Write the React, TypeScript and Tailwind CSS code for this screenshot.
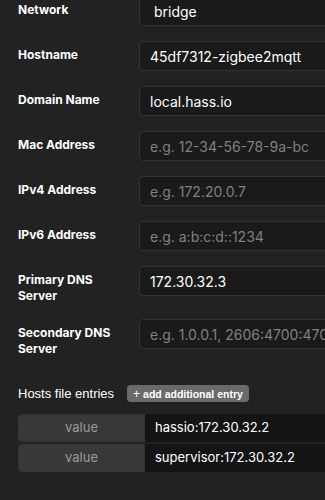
import React from "react";

const fields = [
  { label: "Hostname", value: "45df7312-zigbee2mqtt" },
  { label: "Domain Name", value: "local.hass.io" },
  { label: "Mac Address", placeholder: "e.g. 12-34-56-78-9a-bc" },
  { label: "IPv4 Address", placeholder: "e.g. 172.20.0.7" },
  { label: "IPv6 Address", placeholder: "e.g. a:b:c:d::1234" },
  { label: "Primary DNS Server", value: "172.30.32.3" },
  { label: "Secondary DNS Server", placeholder: "e.g. 1.0.0.1, 2606:4700:4700::1001" },
];

const hosts = ["hassio:172.30.32.2", "supervisor:172.30.32.2"];

const Field = ({ label, value, placeholder }: { label: string; value?: string; placeholder?: string }) => (
  <div className="flex items-start">
    <div className="w-[139px] shrink-0 pl-[18px] pt-[6px] pr-2 text-[12px] font-bold leading-[16px] text-white">
      {label}
    </div>
    <div className="h-[30px] w-[240px] shrink-0 rounded-[4px] border border-[#333333] bg-[#1a1a1a] px-[10px] flex items-center text-[14px] whitespace-nowrap overflow-hidden">
      {value ? (
        <span className="text-white">{value}</span>
      ) : (
        <span className="text-[#808080]">{placeholder}</span>
      )}
    </div>
  </div>
);

export default function App() {
  return (
    <div
      className="h-[500px] w-[325px] overflow-hidden bg-[#222222]"
      style={{ fontFamily: "Inter, 'Liberation Sans', sans-serif" }}
    >
      <div className="-mt-[4px] flex flex-col gap-[15px]">
        <div className="flex items-start">
          <div className="w-[139px] shrink-0 pl-[18px] pt-[6px] text-[12px] font-bold leading-[16px] text-white">
            Network
          </div>
          <div className="h-[30px] w-[240px] shrink-0 rounded-[4px] border border-[#333333] bg-[#1a1a1a] px-[14px] flex items-center text-[14px] text-white">
            bridge
          </div>
        </div>
        {fields.map((f) => (
          <Field key={f.label} {...f} />
        ))}
      </div>

      <div className="mt-[27px] flex items-center pl-[18px]">
        <span className="font-['Liberation_Sans',sans-serif] text-[13px] text-white">Hosts file entries</span>
        <button className="ml-[13px] flex h-[17px] items-center gap-[3px] rounded-[4px] bg-[#6a6a6a] px-[6px] font-['Liberation_Sans',sans-serif] text-[10.5px] font-bold leading-none text-white">
          <span className="font-normal text-[12px] leading-none">+</span>
          add additional entry
        </button>
      </div>

      <div className="mt-[10px] flex flex-col gap-[2px] pl-[18px]">
        {hosts.map((h) => (
          <div key={h} className="flex h-[28px]">
            <div className="flex w-[127px] shrink-0 items-center justify-center rounded-l-[4px] border border-[#333333] bg-[#383838] text-[13px] text-[#9a9a9a]">
              value
            </div>
            <div className="flex w-[200px] shrink-0 items-center bg-[#141414] pl-[10px] text-[13px] text-white">
              {h}
            </div>
          </div>
        ))}
      </div>
    </div>
  );
}
